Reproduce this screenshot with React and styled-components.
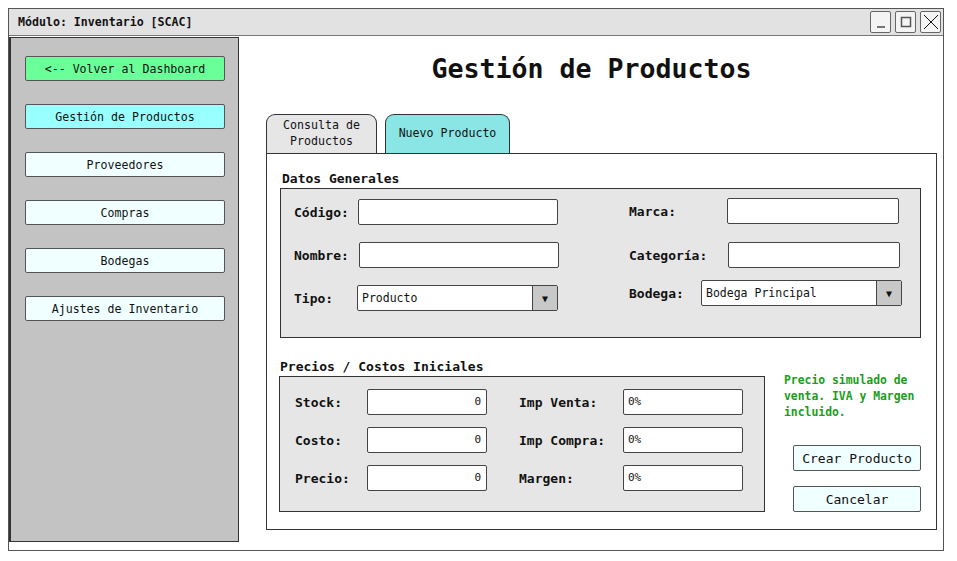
import React from 'react';
import styled, { createGlobalStyle } from 'styled-components';

const GlobalStyle = createGlobalStyle`
  html, body {
    margin: 0;
    padding: 0;
    background: #ffffff;
  }
  body {
    font-family: "DejaVu Sans Mono", "Liberation Mono", monospace;
    color: #111;
  }
`;

const Window = styled.div`
  margin: 8px;
  width: 936px;
  height: 543px;
  box-sizing: border-box;
  border: 1px solid #555;
  display: flex;
  flex-direction: column;
  background: #fff;
`;

const TitleBar = styled.div`
  height: 27px;
  flex: none;
  box-sizing: border-box;
  background: #e2e2e2;
  border-bottom: 1px solid #777;
  display: flex;
  align-items: center;
  justify-content: space-between;
  padding: 0 2px 0 9px;
`;

const TitleText = styled.span`
  font-size: 11.6px;
  font-weight: bold;
`;

const Controls = styled.div`
  display: flex;
  gap: 4px;
`;

const ControlBox = styled.div`
  width: 21px;
  height: 22px;
  box-sizing: border-box;
  border: 1.5px solid #666;
  border-radius: 2px;
  background: #f4f4f4;
  display: flex;
  align-items: center;
  justify-content: center;
`;

const Body = styled.div`
  flex: 1;
  display: flex;
  min-height: 0;
`;

const Sidebar = styled.div`
  width: 230px;
  flex: none;
  box-sizing: border-box;
  margin: 1px 0 8px 0;
  background: #c3c3c3;
  border: 1px solid #333;
  border-left-width: 2px;
  padding: 18px 0 0 14px;
  display: flex;
  flex-direction: column;
  gap: 23px;
`;

const NavButton = styled.div`
  width: 200px;
  height: 25px;
  box-sizing: border-box;
  border: 1.5px solid #555;
  border-radius: 2px;
  background: ${p => p.$bg || '#f0ffff'};
  display: flex;
  align-items: center;
  justify-content: center;
  font-size: 11.6px;
`;

const Main = styled.div`
  flex: 1;
  display: flex;
  flex-direction: column;
  padding: 18px 6px 20px 27px;
  min-width: 0;
`;

const PageTitle = styled.h1`
  margin: 0 0 0 -20px;
  text-align: center;
  font-size: 26.6px;
  line-height: 30px;
  font-weight: bold;
`;

const Tabs = styled.div`
  margin-top: 30px;
  display: flex;
  gap: 8px;
  align-items: flex-end;
`;

const Tab = styled.div`
  width: ${p => p.$w}px;
  height: 39px;
  box-sizing: border-box;
  border: 1px solid #333;
  border-bottom: none;
  border-radius: 9px 9px 0 0;
  background: ${p => (p.$active ? '#8ae5e5' : '#e6e6e6')};
  display: flex;
  align-items: center;
  justify-content: center;
  text-align: center;
  font-size: 11.6px;
  line-height: 16px;
  padding-bottom: 2px;
`;

const Panel = styled.div`
  flex: 1;
  box-sizing: border-box;
  border: 1px solid #333;
  padding: 17px 15px 16px 13px;
  display: flex;
  flex-direction: column;
`;

const SectionTitle = styled.div`
  font-size: 13px;
  font-weight: bold;
  line-height: 16px;
  margin: ${p => p.$mt || 0}px 0 1px ${p => p.$ml || 0}px;
`;

const GroupBox = styled.div`
  box-sizing: border-box;
  background: #e6e6e6;
  border: 1px solid #333;
`;

const GeneralBox = styled(GroupBox)`
  height: 150px;
  padding: 10px 14px 0 13px;
  display: flex;
  gap: 70px;
`;

const FieldCol = styled.div`
  display: flex;
  flex-direction: column;
`;

const Field = styled.div`
  display: flex;
  align-items: center;
  margin-top: ${p => p.$mt || 0}px;
`;

const Label = styled.span`
  width: ${p => p.$w}px;
  flex: none;
  font-size: 13px;
  font-weight: bold;
`;

const TextInput = styled.div`
  width: ${p => p.$w}px;
  height: 26px;
  box-sizing: border-box;
  background: #fff;
  border: 1.5px solid #444;
  border-radius: 2px;
  display: flex;
  align-items: center;
  justify-content: ${p => (p.$right ? 'flex-end' : 'flex-start')};
  padding: 0 5px 2px 4px;
  font-size: 11px;
`;

const Select = styled.div`
  width: ${p => p.$w}px;
  height: 26px;
  box-sizing: border-box;
  background: #fff;
  border: 1.5px solid #444;
  border-radius: 2px;
  display: flex;
  font-size: 11.5px;
`;

const SelectValue = styled.span`
  flex: 1;
  display: flex;
  align-items: center;
  padding-left: 4px;
`;

const SelectArrow = styled.span`
  width: 24px;
  flex: none;
  background: #c8c8c8;
  border-left: 1px solid #444;
  display: flex;
  align-items: center;
  justify-content: center;
  font-size: 10px;
`;

const LowerRow = styled.div`
  display: flex;
  gap: 18px;
  align-items: flex-start;
`;

const PriceBox = styled(GroupBox)`
  width: 489px;
  height: 136px;
  margin-left: -1px;
  padding: 12px 0 0 15px;
  display: grid;
  grid-template-columns: 72px 120px 32px 104px 120px;
  grid-auto-rows: 26px;
  row-gap: 12px;
  align-items: center;
`;

const Side = styled.div`
  margin-top: -4px;
  display: flex;
  flex-direction: column;
`;

const Note = styled.div`
  color: #18a018;
  font-weight: bold;
  font-size: 11.4px;
  line-height: 16px;
  margin-left: 1px;
`;

const Actions = styled.div`
  margin: 25px 0 0 10px;
  display: flex;
  flex-direction: column;
  gap: 15px;
`;

const ActionButton = styled.div`
  width: 128px;
  height: 26px;
  box-sizing: border-box;
  border: 1.5px solid #555;
  border-radius: 2px;
  background: #f0ffff;
  display: flex;
  align-items: center;
  justify-content: center;
  font-size: 13px;
`;

const priceRows = [
  ['Stock:', 'Imp Venta:', '0', '0%'],
  ['Costo:', 'Imp Compra:', '0', '0%'],
  ['Precio:', 'Margen:', '0', '0%'],
];

export default function App() {
  return (
    <>
      <GlobalStyle />
      <Window>
        <TitleBar>
          <TitleText>Módulo: Inventario [SCAC]</TitleText>
          <Controls>
            <ControlBox>
              <svg width="14" height="14" viewBox="0 0 14 14">
                <path d="M3 12h8" stroke="#555" strokeWidth="1.6" />
              </svg>
            </ControlBox>
            <ControlBox>
              <svg width="14" height="14" viewBox="0 0 14 14">
                <rect x="2.5" y="2.5" width="9" height="9" fill="none" stroke="#555" strokeWidth="1.5" />
              </svg>
            </ControlBox>
            <ControlBox>
              <svg width="16" height="16" viewBox="0 0 16 16">
                <path d="M1 1L15 15M15 1L1 15" stroke="#111" strokeWidth="1" />
              </svg>
            </ControlBox>
          </Controls>
        </TitleBar>
        <Body>
          <Sidebar>
            <NavButton $bg="#6aff98">&lt;-- Volver al Dashboard</NavButton>
            <NavButton $bg="#99ffff">Gestión de Productos</NavButton>
            <NavButton>Proveedores</NavButton>
            <NavButton>Compras</NavButton>
            <NavButton>Bodegas</NavButton>
            <NavButton>Ajustes de Inventario</NavButton>
          </Sidebar>
          <Main>
            <PageTitle>Gestión de Productos</PageTitle>
            <Tabs>
              <Tab $w={111}>Consulta de<br />Productos</Tab>
              <Tab $w={125} $active>Nuevo Producto</Tab>
            </Tabs>
            <Panel>
              <SectionTitle $ml={2}>Datos Generales</SectionTitle>
              <GeneralBox>
                <FieldCol>
                  <Field>
                    <Label $w={64}>Código:</Label>
                    <TextInput $w={200} />
                  </Field>
                  <Field $mt={17}>
                    <Label $w={65}>Nombre:</Label>
                    <TextInput $w={200} />
                  </Field>
                  <Field $mt={17}>
                    <Label $w={63}>Tipo:</Label>
                    <Select $w={201}>
                      <SelectValue>Producto</SelectValue>
                      <SelectArrow>▼</SelectArrow>
                    </Select>
                  </Field>
                </FieldCol>
                <FieldCol>
                  <Field $mt={-1}>
                    <Label $w={98}>Marca:</Label>
                    <TextInput $w={172} />
                  </Field>
                  <Field $mt={18}>
                    <Label $w={99}>Categoría:</Label>
                    <TextInput $w={172} />
                  </Field>
                  <Field $mt={12}>
                    <Label $w={72}>Bodega:</Label>
                    <Select $w={201}>
                      <SelectValue>Bodega Principal</SelectValue>
                      <SelectArrow>▼</SelectArrow>
                    </Select>
                  </Field>
                </FieldCol>
              </GeneralBox>
              <SectionTitle $mt={21}>Precios / Costos Iniciales</SectionTitle>
              <LowerRow>
                <PriceBox>
                  {priceRows.map(([a, b, v, p]) => (
                    <React.Fragment key={a}>
                      <Label $w={72}>{a}</Label>
                      <TextInput $w={120} $right>{v}</TextInput>
                      <span />
                      <Label $w={104}>{b}</Label>
                      <TextInput $w={120}>{p}</TextInput>
                    </React.Fragment>
                  ))}
                </PriceBox>
                <Side>
                  <Note>
                    Precio simulado de<br />
                    venta. IVA y Margen<br />
                    incluido.
                  </Note>
                  <Actions>
                    <ActionButton>Crear Producto</ActionButton>
                    <ActionButton>Cancelar</ActionButton>
                  </Actions>
                </Side>
              </LowerRow>
            </Panel>
          </Main>
        </Body>
      </Window>
    </>
  );
}
